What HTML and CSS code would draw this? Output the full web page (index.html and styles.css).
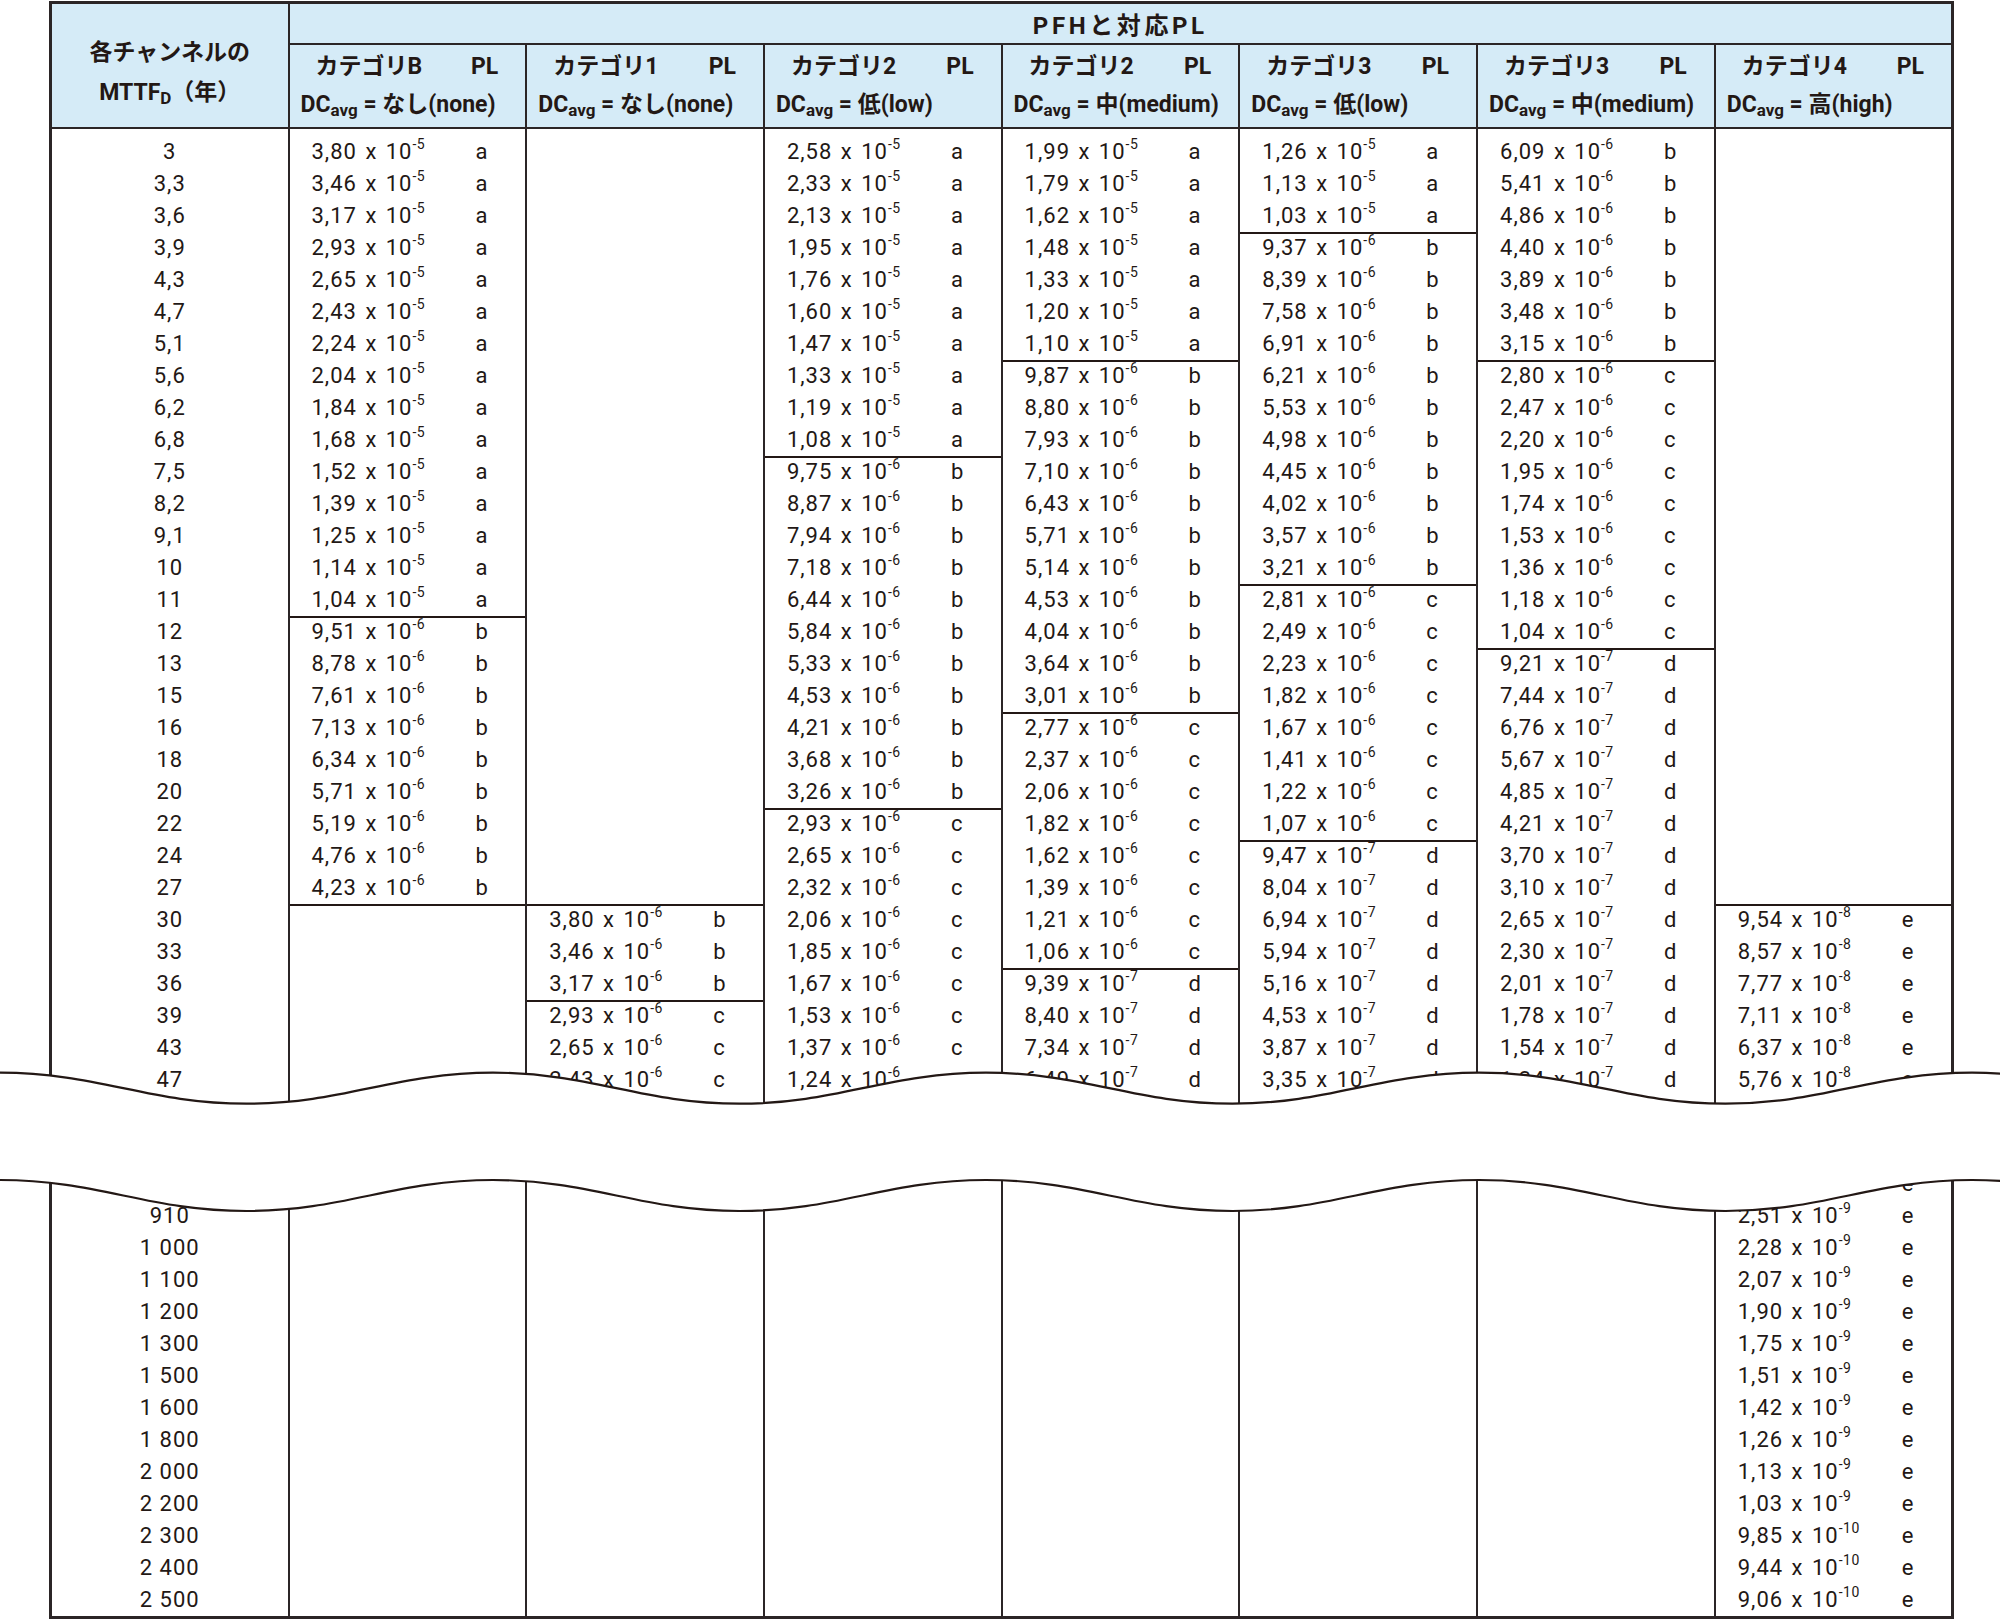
FILE: index.html
```html
<!DOCTYPE html>
<html lang="ja">
<head>
<meta charset="utf-8">
<title>PFHと対応PL</title>
<link rel="stylesheet" href="styles.css">
</head>
<body>
<div class="page">
<table class="pfh">
<colgroup>
<col class="c-mttf">
<col class="c-val"><col class="c-pl">
<col class="c-val"><col class="c-pl">
<col class="c-val"><col class="c-pl">
<col class="c-val"><col class="c-pl">
<col class="c-val"><col class="c-pl">
<col class="c-val"><col class="c-pl">
<col class="c-val"><col class="c-pl">
</colgroup>
<thead>
<tr>
<th rowspan="2" class="h-mttf">各チャンネルの<br>MTTF<sub>D</sub>（年）</th>
<th colspan="14" class="h-top">PFHと対応PL</th>
</tr>
<tr>
<th colspan="2" class="h-cat"><div class="l1"><span>カテゴリB</span><span>PL</span></div><div class="l2">DC<sub>avg</sub> = なし(none)</div></th>
<th colspan="2" class="h-cat"><div class="l1"><span>カテゴリ1</span><span>PL</span></div><div class="l2">DC<sub>avg</sub> = なし(none)</div></th>
<th colspan="2" class="h-cat"><div class="l1"><span>カテゴリ2</span><span>PL</span></div><div class="l2">DC<sub>avg</sub> = 低(low)</div></th>
<th colspan="2" class="h-cat"><div class="l1"><span>カテゴリ2</span><span>PL</span></div><div class="l2">DC<sub>avg</sub> = 中(medium)</div></th>
<th colspan="2" class="h-cat"><div class="l1"><span>カテゴリ3</span><span>PL</span></div><div class="l2">DC<sub>avg</sub> = 低(low)</div></th>
<th colspan="2" class="h-cat"><div class="l1"><span>カテゴリ3</span><span>PL</span></div><div class="l2">DC<sub>avg</sub> = 中(medium)</div></th>
<th colspan="2" class="h-cat"><div class="l1"><span>カテゴリ4</span><span>PL</span></div><div class="l2">DC<sub>avg</sub> = 高(high)</div></th>
</tr>
</thead>
<tbody>
<tr class="first"><td>3</td><td>3,80 x 10<sup>-5</sup></td><td>a</td><td></td><td></td><td>2,58 x 10<sup>-5</sup></td><td>a</td><td>1,99 x 10<sup>-5</sup></td><td>a</td><td>1,26 x 10<sup>-5</sup></td><td>a</td><td>6,09 x 10<sup>-6</sup></td><td>b</td><td></td><td></td></tr>
<tr><td>3,3</td><td>3,46 x 10<sup>-5</sup></td><td>a</td><td></td><td></td><td>2,33 x 10<sup>-5</sup></td><td>a</td><td>1,79 x 10<sup>-5</sup></td><td>a</td><td>1,13 x 10<sup>-5</sup></td><td>a</td><td>5,41 x 10<sup>-6</sup></td><td>b</td><td></td><td></td></tr>
<tr><td>3,6</td><td>3,17 x 10<sup>-5</sup></td><td>a</td><td></td><td></td><td>2,13 x 10<sup>-5</sup></td><td>a</td><td>1,62 x 10<sup>-5</sup></td><td>a</td><td>1,03 x 10<sup>-5</sup></td><td>a</td><td>4,86 x 10<sup>-6</sup></td><td>b</td><td></td><td></td></tr>
<tr><td>3,9</td><td>2,93 x 10<sup>-5</sup></td><td>a</td><td></td><td></td><td>1,95 x 10<sup>-5</sup></td><td>a</td><td>1,48 x 10<sup>-5</sup></td><td>a</td><td class="t">9,37 x 10<sup>-6</sup></td><td class="t">b</td><td>4,40 x 10<sup>-6</sup></td><td>b</td><td></td><td></td></tr>
<tr><td>4,3</td><td>2,65 x 10<sup>-5</sup></td><td>a</td><td></td><td></td><td>1,76 x 10<sup>-5</sup></td><td>a</td><td>1,33 x 10<sup>-5</sup></td><td>a</td><td>8,39 x 10<sup>-6</sup></td><td>b</td><td>3,89 x 10<sup>-6</sup></td><td>b</td><td></td><td></td></tr>
<tr><td>4,7</td><td>2,43 x 10<sup>-5</sup></td><td>a</td><td></td><td></td><td>1,60 x 10<sup>-5</sup></td><td>a</td><td>1,20 x 10<sup>-5</sup></td><td>a</td><td>7,58 x 10<sup>-6</sup></td><td>b</td><td>3,48 x 10<sup>-6</sup></td><td>b</td><td></td><td></td></tr>
<tr><td>5,1</td><td>2,24 x 10<sup>-5</sup></td><td>a</td><td></td><td></td><td>1,47 x 10<sup>-5</sup></td><td>a</td><td>1,10 x 10<sup>-5</sup></td><td>a</td><td>6,91 x 10<sup>-6</sup></td><td>b</td><td>3,15 x 10<sup>-6</sup></td><td>b</td><td></td><td></td></tr>
<tr><td>5,6</td><td>2,04 x 10<sup>-5</sup></td><td>a</td><td></td><td></td><td>1,33 x 10<sup>-5</sup></td><td>a</td><td class="t">9,87 x 10<sup>-6</sup></td><td class="t">b</td><td>6,21 x 10<sup>-6</sup></td><td>b</td><td class="t">2,80 x 10<sup>-6</sup></td><td class="t">c</td><td></td><td></td></tr>
<tr><td>6,2</td><td>1,84 x 10<sup>-5</sup></td><td>a</td><td></td><td></td><td>1,19 x 10<sup>-5</sup></td><td>a</td><td>8,80 x 10<sup>-6</sup></td><td>b</td><td>5,53 x 10<sup>-6</sup></td><td>b</td><td>2,47 x 10<sup>-6</sup></td><td>c</td><td></td><td></td></tr>
<tr><td>6,8</td><td>1,68 x 10<sup>-5</sup></td><td>a</td><td></td><td></td><td>1,08 x 10<sup>-5</sup></td><td>a</td><td>7,93 x 10<sup>-6</sup></td><td>b</td><td>4,98 x 10<sup>-6</sup></td><td>b</td><td>2,20 x 10<sup>-6</sup></td><td>c</td><td></td><td></td></tr>
<tr><td>7,5</td><td>1,52 x 10<sup>-5</sup></td><td>a</td><td></td><td></td><td class="t">9,75 x 10<sup>-6</sup></td><td class="t">b</td><td>7,10 x 10<sup>-6</sup></td><td>b</td><td>4,45 x 10<sup>-6</sup></td><td>b</td><td>1,95 x 10<sup>-6</sup></td><td>c</td><td></td><td></td></tr>
<tr><td>8,2</td><td>1,39 x 10<sup>-5</sup></td><td>a</td><td></td><td></td><td>8,87 x 10<sup>-6</sup></td><td>b</td><td>6,43 x 10<sup>-6</sup></td><td>b</td><td>4,02 x 10<sup>-6</sup></td><td>b</td><td>1,74 x 10<sup>-6</sup></td><td>c</td><td></td><td></td></tr>
<tr><td>9,1</td><td>1,25 x 10<sup>-5</sup></td><td>a</td><td></td><td></td><td>7,94 x 10<sup>-6</sup></td><td>b</td><td>5,71 x 10<sup>-6</sup></td><td>b</td><td>3,57 x 10<sup>-6</sup></td><td>b</td><td>1,53 x 10<sup>-6</sup></td><td>c</td><td></td><td></td></tr>
<tr><td>10</td><td>1,14 x 10<sup>-5</sup></td><td>a</td><td></td><td></td><td>7,18 x 10<sup>-6</sup></td><td>b</td><td>5,14 x 10<sup>-6</sup></td><td>b</td><td>3,21 x 10<sup>-6</sup></td><td>b</td><td>1,36 x 10<sup>-6</sup></td><td>c</td><td></td><td></td></tr>
<tr><td>11</td><td>1,04 x 10<sup>-5</sup></td><td>a</td><td></td><td></td><td>6,44 x 10<sup>-6</sup></td><td>b</td><td>4,53 x 10<sup>-6</sup></td><td>b</td><td class="t">2,81 x 10<sup>-6</sup></td><td class="t">c</td><td>1,18 x 10<sup>-6</sup></td><td>c</td><td></td><td></td></tr>
<tr><td>12</td><td class="t">9,51 x 10<sup>-6</sup></td><td class="t">b</td><td></td><td></td><td>5,84 x 10<sup>-6</sup></td><td>b</td><td>4,04 x 10<sup>-6</sup></td><td>b</td><td>2,49 x 10<sup>-6</sup></td><td>c</td><td>1,04 x 10<sup>-6</sup></td><td>c</td><td></td><td></td></tr>
<tr><td>13</td><td>8,78 x 10<sup>-6</sup></td><td>b</td><td></td><td></td><td>5,33 x 10<sup>-6</sup></td><td>b</td><td>3,64 x 10<sup>-6</sup></td><td>b</td><td>2,23 x 10<sup>-6</sup></td><td>c</td><td class="t">9,21 x 10<sup>-7</sup></td><td class="t">d</td><td></td><td></td></tr>
<tr><td>15</td><td>7,61 x 10<sup>-6</sup></td><td>b</td><td></td><td></td><td>4,53 x 10<sup>-6</sup></td><td>b</td><td>3,01 x 10<sup>-6</sup></td><td>b</td><td>1,82 x 10<sup>-6</sup></td><td>c</td><td>7,44 x 10<sup>-7</sup></td><td>d</td><td></td><td></td></tr>
<tr><td>16</td><td>7,13 x 10<sup>-6</sup></td><td>b</td><td></td><td></td><td>4,21 x 10<sup>-6</sup></td><td>b</td><td class="t">2,77 x 10<sup>-6</sup></td><td class="t">c</td><td>1,67 x 10<sup>-6</sup></td><td>c</td><td>6,76 x 10<sup>-7</sup></td><td>d</td><td></td><td></td></tr>
<tr><td>18</td><td>6,34 x 10<sup>-6</sup></td><td>b</td><td></td><td></td><td>3,68 x 10<sup>-6</sup></td><td>b</td><td>2,37 x 10<sup>-6</sup></td><td>c</td><td>1,41 x 10<sup>-6</sup></td><td>c</td><td>5,67 x 10<sup>-7</sup></td><td>d</td><td></td><td></td></tr>
<tr><td>20</td><td>5,71 x 10<sup>-6</sup></td><td>b</td><td></td><td></td><td>3,26 x 10<sup>-6</sup></td><td>b</td><td>2,06 x 10<sup>-6</sup></td><td>c</td><td>1,22 x 10<sup>-6</sup></td><td>c</td><td>4,85 x 10<sup>-7</sup></td><td>d</td><td></td><td></td></tr>
<tr><td>22</td><td>5,19 x 10<sup>-6</sup></td><td>b</td><td></td><td></td><td class="t">2,93 x 10<sup>-6</sup></td><td class="t">c</td><td>1,82 x 10<sup>-6</sup></td><td>c</td><td>1,07 x 10<sup>-6</sup></td><td>c</td><td>4,21 x 10<sup>-7</sup></td><td>d</td><td></td><td></td></tr>
<tr><td>24</td><td>4,76 x 10<sup>-6</sup></td><td>b</td><td></td><td></td><td>2,65 x 10<sup>-6</sup></td><td>c</td><td>1,62 x 10<sup>-6</sup></td><td>c</td><td class="t">9,47 x 10<sup>-7</sup></td><td class="t">d</td><td>3,70 x 10<sup>-7</sup></td><td>d</td><td></td><td></td></tr>
<tr><td>27</td><td>4,23 x 10<sup>-6</sup></td><td>b</td><td></td><td></td><td>2,32 x 10<sup>-6</sup></td><td>c</td><td>1,39 x 10<sup>-6</sup></td><td>c</td><td>8,04 x 10<sup>-7</sup></td><td>d</td><td>3,10 x 10<sup>-7</sup></td><td>d</td><td></td><td></td></tr>
<tr><td>30</td><td class="t"></td><td class="t"></td><td class="t">3,80 x 10<sup>-6</sup></td><td class="t">b</td><td>2,06 x 10<sup>-6</sup></td><td>c</td><td>1,21 x 10<sup>-6</sup></td><td>c</td><td>6,94 x 10<sup>-7</sup></td><td>d</td><td>2,65 x 10<sup>-7</sup></td><td>d</td><td class="t">9,54 x 10<sup>-8</sup></td><td class="t">e</td></tr>
<tr><td>33</td><td></td><td></td><td>3,46 x 10<sup>-6</sup></td><td>b</td><td>1,85 x 10<sup>-6</sup></td><td>c</td><td>1,06 x 10<sup>-6</sup></td><td>c</td><td>5,94 x 10<sup>-7</sup></td><td>d</td><td>2,30 x 10<sup>-7</sup></td><td>d</td><td>8,57 x 10<sup>-8</sup></td><td>e</td></tr>
<tr><td>36</td><td></td><td></td><td>3,17 x 10<sup>-6</sup></td><td>b</td><td>1,67 x 10<sup>-6</sup></td><td>c</td><td class="t">9,39 x 10<sup>-7</sup></td><td class="t">d</td><td>5,16 x 10<sup>-7</sup></td><td>d</td><td>2,01 x 10<sup>-7</sup></td><td>d</td><td>7,77 x 10<sup>-8</sup></td><td>e</td></tr>
<tr><td>39</td><td></td><td></td><td class="t">2,93 x 10<sup>-6</sup></td><td class="t">c</td><td>1,53 x 10<sup>-6</sup></td><td>c</td><td>8,40 x 10<sup>-7</sup></td><td>d</td><td>4,53 x 10<sup>-7</sup></td><td>d</td><td>1,78 x 10<sup>-7</sup></td><td>d</td><td>7,11 x 10<sup>-8</sup></td><td>e</td></tr>
<tr><td>43</td><td></td><td></td><td>2,65 x 10<sup>-6</sup></td><td>c</td><td>1,37 x 10<sup>-6</sup></td><td>c</td><td>7,34 x 10<sup>-7</sup></td><td>d</td><td>3,87 x 10<sup>-7</sup></td><td>d</td><td>1,54 x 10<sup>-7</sup></td><td>d</td><td>6,37 x 10<sup>-8</sup></td><td>e</td></tr>
<tr><td>47</td><td></td><td></td><td>2,43 x 10<sup>-6</sup></td><td>c</td><td>1,24 x 10<sup>-6</sup></td><td>c</td><td>6,49 x 10<sup>-7</sup></td><td>d</td><td>3,35 x 10<sup>-7</sup></td><td>d</td><td>1,34 x 10<sup>-7</sup></td><td>d</td><td>5,76 x 10<sup>-8</sup></td><td>e</td></tr>
<tr><td>51</td><td></td><td></td><td>2,20 x 10<sup>-6</sup></td><td>c</td><td>1,13 x 10<sup>-6</sup></td><td>c</td><td>5,81 x 10<sup>-7</sup></td><td>d</td><td>3,06 x 10<sup>-7</sup></td><td>d</td><td>1,21 x 10<sup>-7</sup></td><td>d</td><td>5,26 x 10<sup>-8</sup></td><td>e</td></tr>
<tr class="gap"><td></td><td></td><td></td><td></td><td></td><td></td><td></td><td></td><td></td><td></td><td></td><td></td><td></td><td></td><td></td></tr>
<tr><td>820</td><td></td><td></td><td></td><td></td><td></td><td></td><td></td><td></td><td></td><td></td><td></td><td></td><td>2,78 x 10<sup>-9</sup></td><td>e</td></tr>
<tr><td>910</td><td></td><td></td><td></td><td></td><td></td><td></td><td></td><td></td><td></td><td></td><td></td><td></td><td>2,51 x 10<sup>-9</sup></td><td>e</td></tr>
<tr><td>1 000</td><td></td><td></td><td></td><td></td><td></td><td></td><td></td><td></td><td></td><td></td><td></td><td></td><td>2,28 x 10<sup>-9</sup></td><td>e</td></tr>
<tr><td>1 100</td><td></td><td></td><td></td><td></td><td></td><td></td><td></td><td></td><td></td><td></td><td></td><td></td><td>2,07 x 10<sup>-9</sup></td><td>e</td></tr>
<tr><td>1 200</td><td></td><td></td><td></td><td></td><td></td><td></td><td></td><td></td><td></td><td></td><td></td><td></td><td>1,90 x 10<sup>-9</sup></td><td>e</td></tr>
<tr><td>1 300</td><td></td><td></td><td></td><td></td><td></td><td></td><td></td><td></td><td></td><td></td><td></td><td></td><td>1,75 x 10<sup>-9</sup></td><td>e</td></tr>
<tr><td>1 500</td><td></td><td></td><td></td><td></td><td></td><td></td><td></td><td></td><td></td><td></td><td></td><td></td><td>1,51 x 10<sup>-9</sup></td><td>e</td></tr>
<tr><td>1 600</td><td></td><td></td><td></td><td></td><td></td><td></td><td></td><td></td><td></td><td></td><td></td><td></td><td>1,42 x 10<sup>-9</sup></td><td>e</td></tr>
<tr><td>1 800</td><td></td><td></td><td></td><td></td><td></td><td></td><td></td><td></td><td></td><td></td><td></td><td></td><td>1,26 x 10<sup>-9</sup></td><td>e</td></tr>
<tr><td>2 000</td><td></td><td></td><td></td><td></td><td></td><td></td><td></td><td></td><td></td><td></td><td></td><td></td><td>1,13 x 10<sup>-9</sup></td><td>e</td></tr>
<tr><td>2 200</td><td></td><td></td><td></td><td></td><td></td><td></td><td></td><td></td><td></td><td></td><td></td><td></td><td>1,03 x 10<sup>-9</sup></td><td>e</td></tr>
<tr><td>2 300</td><td></td><td></td><td></td><td></td><td></td><td></td><td></td><td></td><td></td><td></td><td></td><td></td><td>9,85 x 10<sup>-10</sup></td><td>e</td></tr>
<tr><td>2 400</td><td></td><td></td><td></td><td></td><td></td><td></td><td></td><td></td><td></td><td></td><td></td><td></td><td>9,44 x 10<sup>-10</sup></td><td>e</td></tr>
<tr><td>2 500</td><td></td><td></td><td></td><td></td><td></td><td></td><td></td><td></td><td></td><td></td><td></td><td></td><td>9,06 x 10<sup>-10</sup></td><td>e</td></tr>
</tbody>
</table>
<svg class="break" width="2000" height="160" viewBox="0 0 2000 160" aria-hidden="true">
<path d="M0,12.7 C98.6,12.7 147.9,43.7 246.5,43.7 C345.1,43.7 394.4,12.7 493,12.7 C591.6,12.7 640.9,43.7 739.5,43.7 C838.1,43.7 887.4,12.7 986,12.7 C1084.6,12.7 1133.9,43.7 1232.5,43.7 C1331.1,43.7 1380.4,12.7 1479,12.7 C1577.6,12.7 1626.9,43.7 1725.5,43.7 C1824.1,43.7 1873.4,12.7 1972,12.7 C2070.6,12.7 2119.9,43.7 2218.5,43.7 L2218.5,151 C2119.9,151 2070.6,120 1972,120 C1873.4,120 1824.1,151 1725.5,151 C1626.9,151 1577.6,120 1479,120 C1380.4,120 1331.1,151 1232.5,151 C1133.9,151 1084.6,120 986,120 C887.4,120 838.1,151 739.5,151 C640.9,151 591.6,120 493,120 C394.4,120 345.1,151 246.5,151 C147.9,151 98.6,120 0,120 Z" fill="#ffffff"/>
<path d="M0,12.7 C98.6,12.7 147.9,43.7 246.5,43.7 C345.1,43.7 394.4,12.7 493,12.7 C591.6,12.7 640.9,43.7 739.5,43.7 C838.1,43.7 887.4,12.7 986,12.7 C1084.6,12.7 1133.9,43.7 1232.5,43.7 C1331.1,43.7 1380.4,12.7 1479,12.7 C1577.6,12.7 1626.9,43.7 1725.5,43.7 C1824.1,43.7 1873.4,12.7 1972,12.7 C2070.6,12.7 2119.9,43.7 2218.5,43.7" fill="none" stroke="#231815" stroke-width="2.2"/>
<path d="M0,120 C98.6,120 147.9,151 246.5,151 C345.1,151 394.4,120 493,120 C591.6,120 640.9,151 739.5,151 C838.1,151 887.4,120 986,120 C1084.6,120 1133.9,151 1232.5,151 C1331.1,151 1380.4,120 1479,120 C1577.6,120 1626.9,151 1725.5,151 C1824.1,151 1873.4,120 1972,120 C2070.6,120 2119.9,151 2218.5,151" fill="none" stroke="#231815" stroke-width="2.2"/>
</svg>
</div>
</body>
</html>
```

FILE: styles.css
```css
* { box-sizing: border-box; }
html, body { margin: 0; padding: 0; background: #ffffff; }
body {
  width: 2000px;
  height: 1622px;
  overflow: hidden;
  font-family: Roboto, "Noto Sans CJK JP", sans-serif;
  color: #231815;
}
.page {
  position: relative;
  width: 2000px;
  height: 1622px;
  padding-top: 1px;
}
.pfh {
  border-collapse: collapse;
  table-layout: fixed;
  width: 1902px;
  margin-left: 49px;
  border: 3px solid #2b2526;
}
.pfh col.c-mttf { width: 238px; }
.pfh col.c-val { width: 187px; }
.pfh col.c-pl { width: 50.71px; }

.pfh th {
  background: #d5ebf7;
  border: 2px solid #2b2526;
  font-weight: 700;
  font-size: 23px;
  padding: 0;
  white-space: nowrap;
}
.h-top {
  height: 41px;
  font-size: 24px !important;
  letter-spacing: 3.6px;
}
.h-mttf {
  vertical-align: top;
  padding-top: 29px !important;
  line-height: 40px;
}
.h-cat {
  height: 84px;
  vertical-align: top;
  text-align: left;
  padding-top: 1px !important;
}
.h-cat .l1 {
  display: flex;
  justify-content: space-between;
  padding: 0 27px 0 26px;
  height: 41px;
  line-height: 41px;
}
.h-cat .l2 {
  line-height: 36px;
  padding-left: 11px;
}
.pfh sub {
  font-size: 17px;
  vertical-align: -4px;
  line-height: 0;
}

.pfh td {
  padding: 0;
  height: 32px;
  line-height: 32px;
  font-size: 22px;
  letter-spacing: 1px;
  word-spacing: 2px;
  white-space: nowrap;
}
.pfh tbody td:nth-child(odd) { border-right: 2px solid #2b2526; }
.pfh tbody td:first-child { text-align: center; word-spacing: 0; }
.pfh tbody td:nth-child(even) { padding-left: 22px; }
.pfh td.t {
  background: linear-gradient(#231815, #231815) top left / 100% 2px no-repeat;
}
.pfh tr.first td { padding-top: 7px; height: 39px; }
.pfh tr.gap td { height: 40px; }
.pfh sup {
  font-size: 14px;
  vertical-align: 10px;
  line-height: 0;
  letter-spacing: 0.5px;
}
.break {
  position: absolute;
  left: 0;
  top: 1060px;
}
```
